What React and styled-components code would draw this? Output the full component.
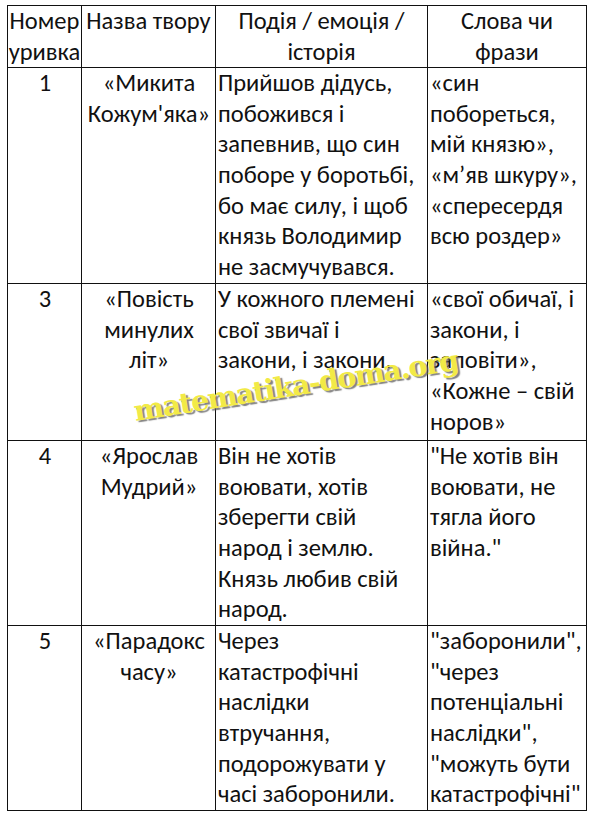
import React from "react";
import styled, { createGlobalStyle } from "styled-components";

const Global = createGlobalStyle`
  html, body { margin: 0; padding: 0; background: #fff; }
  body { font-family: Carlito, "Lato", "Liberation Sans", sans-serif; }
`;

const Page = styled.div`
  position: relative;
  width: 592px;
  height: 813px;
  padding: 5px 0 0 7px;
  box-sizing: border-box;
  background: #fff;
  overflow: hidden;
`;

const Table = styled.table`
  border-collapse: collapse;
  table-layout: fixed;
  width: 579px;
  color: #111;
  font-size: 24.5px;
  line-height: 30.6px;
`;

const Cell = styled.td`
  border: 1.5px solid #111;
  padding: 0 1px 0 2px;
  vertical-align: top;
  text-align: ${(p) => (p.$center ? "center" : "left")};
  white-space: nowrap;
  height: ${(p) => p.$h}px;
  box-sizing: border-box;
`;

const HeadCell = styled(Cell).attrs({ as: "th" })`
  font-weight: normal;
  text-align: center;
  padding: 0;
`;

const Line = styled.div`
  display: block;
`;

const Watermark = styled.div`
  position: absolute;
  left: 134px;
  top: 394px;
  font-family: "DejaVu Serif", serif;
  font-weight: bold;
  font-size: 28.5px;
  letter-spacing: -1.4px;
  color: #f2ea46;
  text-shadow: 2px 2px 1px rgba(90, 90, 90, 0.75);
  transform: rotate(-9deg);
  transform-origin: left center;
  white-space: nowrap;
  pointer-events: none;
`;

const rows = [
  {
    h: 216,
    n: "1",
    title: ["«Микита", "Кожум'яка»"],
    event: [
      "Прийшов дідусь,",
      "побожився і",
      "запевнив, що син",
      "поборе у боротьбі,",
      "бо має силу, і щоб",
      "князь Володимир",
      "не засмучувався.",
    ],
    words: ["«син", "побореться,", "мій князю»,", "«м’яв шкуру»,", "«спересердя", "всю роздер»"],
  },
  {
    h: 157,
    n: "3",
    title: ["«Повість", "минулих", "літ»"],
    event: ["У кожного племені", "свої звичаї і", "закони, і закони."],
    words: ["«свої обичаї, і", "закони, і", "заповіти»,", "«Кожне – свій", "норов»"],
  },
  {
    h: 185,
    n: "4",
    title: ["«Ярослав", "Мудрий»"],
    event: ["Він не хотів", "воювати, хотів", "зберегти свій", "народ і землю.", "Князь любив свій", "народ."],
    words: ["\"Не хотів він", "воювати, не", "тягла його", "війна.\""],
  },
  {
    h: 185,
    n: "5",
    title: ["«Парадокс", "часу»"],
    event: ["Через", "катастрофічні", "наслідки", "втручання,", "подорожувати у", "часі заборонили."],
    words: ["\"заборонили\",", "\"через", "потенціальні", "наслідки\",", "\"можуть бути", "катастрофічні\""],
  },
];

const lines = (arr) => arr.map((t, i) => <Line key={i}>{t}</Line>);

export default function App() {
  return (
    <>
      <Global />
      <Page>
        <Table>
          <colgroup>
            <col style={{ width: 74 }} />
            <col style={{ width: 134 }} />
            <col style={{ width: 212 }} />
            <col style={{ width: 159 }} />
          </colgroup>
          <thead>
            <tr>
              <HeadCell $h={62}>{lines(["Номер", "уривка"])}</HeadCell>
              <HeadCell $h={62}>{lines(["Назва твору"])}</HeadCell>
              <HeadCell $h={62}>{lines(["Подія / емоція /", "історія"])}</HeadCell>
              <HeadCell $h={62}>{lines(["Слова чи", "фрази"])}</HeadCell>
            </tr>
          </thead>
          <tbody>
            {rows.map((r) => (
              <tr key={r.n}>
                <Cell $h={r.h} $center>{lines([r.n])}</Cell>
                <Cell $h={r.h} $center>{lines(r.title)}</Cell>
                <Cell $h={r.h}>{lines(r.event)}</Cell>
                <Cell $h={r.h}>{lines(r.words)}</Cell>
              </tr>
            ))}
          </tbody>
        </Table>
        <Watermark>matematika-doma.org</Watermark>
      </Page>
    </>
  );
}
